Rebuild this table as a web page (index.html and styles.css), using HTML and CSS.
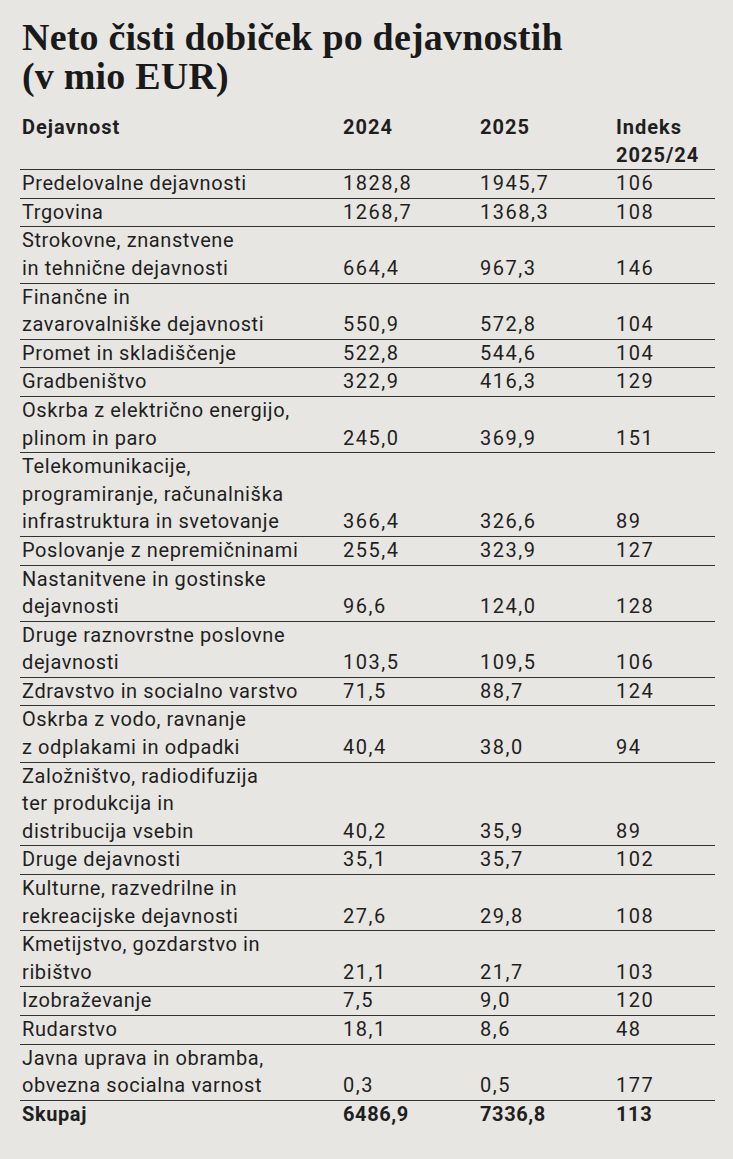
FILE: index.html
```html
<!DOCTYPE html>
<html lang="sl">
<head>
<meta charset="utf-8">
<title>Neto čisti dobiček po dejavnostih</title>
<link rel="stylesheet" href="styles.css">
</head>
<body>
<main class="page">
  <h1 class="title">Neto čisti dobiček po dejavnostih<br>(v mio EUR)</h1>
  <table class="data">
    <thead>
      <tr><th class="c-name">Dejavnost</th><th class="c-a">2024</th><th class="c-b">2025</th><th class="c-i">Indeks<br>2025/24</th></tr>
    </thead>
    <tbody>
      <tr><td>Predelovalne dejavnosti</td><td>1828,8</td><td>1945,7</td><td>106</td></tr>
      <tr><td>Trgovina</td><td>1268,7</td><td>1368,3</td><td>108</td></tr>
      <tr><td>Strokovne, znanstvene<br>in tehnične dejavnosti</td><td>664,4</td><td>967,3</td><td>146</td></tr>
      <tr><td>Finančne in<br>zavarovalniške dejavnosti</td><td>550,9</td><td>572,8</td><td>104</td></tr>
      <tr><td>Promet in skladiščenje</td><td>522,8</td><td>544,6</td><td>104</td></tr>
      <tr><td>Gradbeništvo</td><td>322,9</td><td>416,3</td><td>129</td></tr>
      <tr><td>Oskrba z električno energijo,<br>plinom in paro</td><td>245,0</td><td>369,9</td><td>151</td></tr>
      <tr><td>Telekomunikacije,<br>programiranje, računalniška<br>infrastruktura in svetovanje</td><td>366,4</td><td>326,6</td><td>89</td></tr>
      <tr><td>Poslovanje z nepremičninami</td><td>255,4</td><td>323,9</td><td>127</td></tr>
      <tr><td>Nastanitvene in gostinske<br>dejavnosti</td><td>96,6</td><td>124,0</td><td>128</td></tr>
      <tr><td>Druge raznovrstne poslovne<br>dejavnosti</td><td>103,5</td><td>109,5</td><td>106</td></tr>
      <tr><td>Zdravstvo in socialno varstvo</td><td>71,5</td><td>88,7</td><td>124</td></tr>
      <tr><td>Oskrba z vodo, ravnanje<br>z odplakami in odpadki</td><td>40,4</td><td>38,0</td><td>94</td></tr>
      <tr><td>Založništvo, radiodifuzija<br>ter produkcija in<br>distribucija vsebin</td><td>40,2</td><td>35,9</td><td>89</td></tr>
      <tr><td>Druge dejavnosti</td><td>35,1</td><td>35,7</td><td>102</td></tr>
      <tr><td>Kulturne, razvedrilne in<br>rekreacijske dejavnosti</td><td>27,6</td><td>29,8</td><td>108</td></tr>
      <tr><td>Kmetijstvo, gozdarstvo in<br>ribištvo</td><td>21,1</td><td>21,7</td><td>103</td></tr>
      <tr><td>Izobraževanje</td><td>7,5</td><td>9,0</td><td>120</td></tr>
      <tr><td>Rudarstvo</td><td>18,1</td><td>8,6</td><td>48</td></tr>
      <tr><td>Javna uprava in obramba,<br>obvezna socialna varnost</td><td>0,3</td><td>0,5</td><td>177</td></tr>
    </tbody>
    <tfoot>
      <tr><td>Skupaj</td><td>6486,9</td><td>7336,8</td><td>113</td></tr>
    </tfoot>
  </table>
</main>
</body>
</html>
```

FILE: styles.css
```css
html, body {
  margin: 0;
  padding: 0;
  background: #e7e6e2;
}

.page {
  padding: 18px 18px 0 20px;
  color: #1f1f1f;
}

.title {
  margin: 0 0 18px 2px;
  font-family: "Liberation Serif", serif;
  font-weight: 700;
  font-size: 38px;
  line-height: 39px;
  letter-spacing: 0.2px;
  color: #1a1a1a;
}

.data {
  width: 695px;
  border-collapse: collapse;
  table-layout: fixed;
  font-family: Roboto, "Liberation Sans", sans-serif;
  font-size: 20px;
  letter-spacing: 0.6px;
}

.data th,
.data td {
  padding: 0 0 0 2px;
  text-align: left;
  vertical-align: bottom;
  line-height: 27.6px;
  white-space: nowrap;
}

.data td + td {
  letter-spacing: 1.5px;
}

.data th {
  font-weight: 700;
  vertical-align: top;
  letter-spacing: 1px;
}

.c-name { width: 319px; }
.c-a { width: 135px; }
.c-b { width: 134px; }
.c-i { width: 99px; }

.data thead tr,
.data tbody tr {
  border-bottom: 1px solid #333;
}

.data tfoot td {
  font-weight: 700;
  letter-spacing: 0.6px;
}
```
